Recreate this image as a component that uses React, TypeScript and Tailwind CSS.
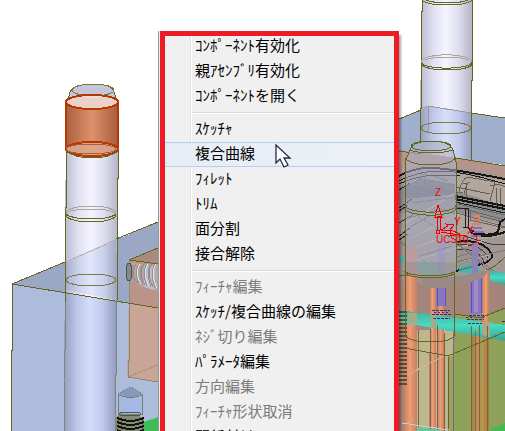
type MenuEntry = { label: string; disabled?: boolean; active?: boolean };

const groups: MenuEntry[][] = [
  [{ label: "ｺﾝﾎﾟｰﾈﾝﾄ有効化" }, { label: "親ｱｾﾝﾌﾞﾘ有効化" }, { label: "ｺﾝﾎﾟｰﾈﾝﾄを開く" }],
  [
    { label: "ｽｹｯﾁｬ" },
    { label: "複合曲線", active: true },
    { label: "ﾌｨﾚｯﾄ" },
    { label: "ﾄﾘﾑ" },
    { label: "面分割" },
    { label: "接合解除" },
  ],
  [
    { label: "ﾌｨｰﾁｬ編集", disabled: true },
    { label: "ｽｹｯﾁ/複合曲線の編集" },
    { label: "ﾈｼﾞ切り編集", disabled: true },
    { label: "ﾊﾟﾗﾒｰﾀ編集" },
    { label: "方向編集", disabled: true },
    { label: "ﾌｨｰﾁｬ形状取消", disabled: true },
    { label: "関係付け" },
  ],
];

function Cursor() {
  return (
    <svg aria-hidden="true" className="shrink-0" width="18" height="26" viewBox="0 0 18 26">
      <path d="M1 2V20L5 16 9 24 13 22 9 15H15Z" fill="white" stroke="#232a40" strokeWidth="1.3" />
    </svg>
  );
}

function MenuItem({ label, disabled, active }: MenuEntry) {
  const state = active
    ? "border-[#aecff7] bg-linear-to-r from-[#e6edf6] to-[#edf0f6]"
    : "border-transparent";
  return (
    <button
      type="button"
      role="menuitem"
      disabled={disabled}
      className={`flex h-[25px] w-full items-start gap-5 border-y pl-[34px] text-left text-[15px] leading-[19px] whitespace-nowrap text-black disabled:text-[#7b7b7b] ${state}`}
    >
      {label}
      {active && <Cursor />}
    </button>
  );
}

function ContextMenu() {
  return (
    <div
      role="menu"
      className="relative flex-1 overflow-hidden border-l border-[#979797] bg-[#f0f0f0] pt-[3px] pr-[5px] pl-[2px] shadow-[2px_4px_2px_rgba(0,0,0,0.35)]"
    >
      <div className="absolute inset-y-0 left-[31px] w-[2px] border-l border-[#e2e3e3] bg-white" />
      <div className="relative flex flex-col">
        {groups.map((group, index) => (
          <div key={index} role="group" className="flex flex-col">
            {index > 0 && (
              <div role="separator" className="flex h-2 items-center pl-[31px]">
                <div className="h-[2px] w-full border-t border-[#d8d8d8] bg-white" />
              </div>
            )}
            {group.map((item) => (
              <MenuItem key={item.label} {...item} />
            ))}
          </div>
        ))}
      </div>
    </div>
  );
}

const coils = [0, 1, 2, 3, 4, 5];
const dashes = [0, 1, 2, 3, 4, 5, 6, 7, 8, 9, 10, 11, 12, 13, 14, 15, 16, 17, 18];

function ModelView() {
  return (
    <svg
      aria-hidden="true"
      className="absolute top-0 left-0"
      width="505"
      height="431"
      viewBox="0 0 505 431"
      fill="none"
      shapeRendering="crispEdges"
    >
      <defs>
        <linearGradient id="steel">
          <stop offset="0" stopColor="#b9b9cd" />
          <stop offset="0.25" stopColor="#dedff0" />
          <stop offset="0.5" stopColor="#f5f4ff" />
          <stop offset="0.75" stopColor="#dcdcee" />
          <stop offset="1" stopColor="#b5b5c8" />
        </linearGradient>
        <linearGradient id="blueSteel">
          <stop offset="0" stopColor="#959fc4" />
          <stop offset="0.25" stopColor="#bcc6e7" />
          <stop offset="0.5" stopColor="#d4ddf8" />
          <stop offset="0.75" stopColor="#bfc8ea" />
          <stop offset="1" stopColor="#929dc2" />
        </linearGradient>
        <linearGradient id="copper">
          <stop offset="0" stopColor="#ac6041" />
          <stop offset="0.5" stopColor="#df916c" />
          <stop offset="1" stopColor="#a65c3e" />
        </linearGradient>
        <linearGradient id="rod">
          <stop offset="0" stopColor="#bd7b5d" />
          <stop offset="0.5" stopColor="#ee9d76" />
          <stop offset="1" stopColor="#c67f60" />
        </linearGradient>
        <linearGradient id="ochre">
          <stop offset="0" stopColor="#a8793e" />
          <stop offset="0.5" stopColor="#cc984e" />
          <stop offset="1" stopColor="#a67a40" />
        </linearGradient>
        <linearGradient id="teal" x1="0" y1="0" x2="0" y2="1">
          <stop offset="0" stopColor="#45ad9d" />
          <stop offset="0.5" stopColor="#49dac2" />
          <stop offset="1" stopColor="#3ba28e" />
        </linearGradient>
      </defs>

      {/* mould plate, left side */}
      <path d="M12 284 158 222V308Z" fill="#9aa8c5" />
      <path d="M12 284 158 308V431H11V351L12 350Z" fill="#adbcda" />
      <path d="M129 260 158 248V264Z" fill="#a98b7e" />
      <path d="M129 260 158 264V382L127 377V360H128Z" fill="#c8a597" />
      <path d="M129 260 158 264V308L129 303Z" fill="#ba9487" />
      <path d="M128 377 158 365" stroke="#ad9575" />
      <path d="M129 260 158 264M129 260 158 248" stroke="#66651d" />
      <path d="M129 260V360H128V377L158 382" stroke="#858b78" />
      <path d="M131 263 158 265V291Q145 289 131 281Z" fill="#b5a6a8" />
      <path d="M144 266h11v24l-11-3Z" fill="#b9bfce" />
      <ellipse cx="129" cy="272" rx="3" ry="9" fill="#858b8b" stroke="#4e5651" />
      {coils.map((i) => (
        <path key={i} d={`M${136 + i * 4} 264q-6 9 1 ${19 + i}`} stroke={i % 2 ? "#eadcd7" : "#b3816d"} />
      ))}
      {coils.map((i) => (
        <path key={i} d={`M${134 + i * 4} 265q-4 9 1 ${18 + i}`} stroke="#8d929c" />
      ))}

      <path d="M144 422 158 417V431H144Z" fill="#3fbd54" />
      <path d="M118 394 131 387 142 394V414H119Z" fill="#a5b9e4" stroke="#76806e" />
      <path d="M118 394 131 387 142 394 131 398Z" fill="#8499bd" />
      <path d="M119 395Q131 400 142 395" stroke="#76806e" />
      <path d="M120 412 123 415H138L144 419V431H116V418Z" fill="#848976" />
      <ellipse cx="130" cy="414" rx="11" ry="2" stroke="#4e564c" />
      {[418, 422, 426, 430].map((y) => (
        <path key={y} d={`M117 ${y}Q130 ${y + 6} 144 ${y}`} stroke="#11150d" strokeWidth="2" />
      ))}

      {/* selected guide pin */}
      <path d="M66 147H118V178L116 280V374L115 431H64V350L65 300V213Z" fill="url(#steel)" />
      <path d="M65 262 116 239V300L65 290Z" fill="url(#blueSteel)" fillOpacity="0.6" />
      <path d="M65 292 116 301V431H64V350Z" fill="url(#blueSteel)" />
      <path d="M12 284 65 262M116 239 158 222M12 284 158 308M12 284V350H11V431" stroke="#66651d" />
      <path d="M70 260 116 240" stroke="#b0b1ad" />
      <path d="M66 149V207H65V302M118 149V178H117V300" stroke="#66651d" />
      <path d="M65 302V350L64 380V431M116 300V374H115V431" stroke="#7c8576" />
      <path d="M67 103 70 92Q74 84 93 84T114 92L118 104Z" fill="#c5c6d9" stroke="#66651d" />
      <ellipse cx="93" cy="90" rx="21" ry="6" stroke="#7a793e" />
      <path d="M66 101H118V149A26 7 0 0 1 66 149Z" fill="url(#copper)" />
      <ellipse cx="92" cy="102" rx="26" ry="7" fill="#ecd1c8" stroke="#b83900" strokeWidth="2" />
      <ellipse cx="92" cy="149" rx="26" ry="7" fill="#e1a992" fillOpacity="0.8" stroke="#b83900" strokeWidth="2" />
      <path d="M66 101V149M118 101V149" stroke="#b83900" strokeWidth="2" />
      <path d="M83 96H102M87 97H98" stroke="#eee0d8" />
      <path d="M67 151Q74 158 92 158T117 151" stroke="#66651d" />
      <ellipse cx="91" cy="149" rx="25" ry="5" stroke="#9e6244" />
      <path d="M66 213A25 6 0 0 0 116 213M66 215A25 7 0 0 0 116 215" stroke="#66651d" />
      <path d="M66 213A25 7 0 0 1 116 213M66 214A25 5 0 0 1 116 214" stroke="#a6a69d" />
      <ellipse cx="91" cy="280" rx="25" ry="6" stroke="#7c7b48" />

      {/* mould plate and guide pin, right side */}
      <path d="M399 119 428 106 505 118V165L399 150Z" fill="#9fafcc" />
      <path d="M399 119 421 110M471 113 505 118" stroke="#66651d" />
      <path d="M422 0H472V80L471 162 420 154V80H421Z" fill="url(#steel)" />
      <path d="M421 110 428 106 471 113V162L421 154Z" fill="url(#blueSteel)" fillOpacity="0.9" />
      <path d="M421 109 428 106 471 113M428 107V131" stroke="#9899a0" />
      <path d="M422 0V11H421V108H420V144M472 0V80H471V162" stroke="#66651d" />
      <path d="M422 0Q427 5 447 5T472 0M426 0Q433 3 447 3T468 0M421 62A25 6 0 0 0 472 62M422 64A25 6 0 0 0 472 64" stroke="#66651d" />
      <path d="M421 62A25 7 0 0 1 472 62M425 60Q432 57 447 57T468 60" stroke="#a6a69d" />
      <ellipse cx="446" cy="128" rx="25" ry="6" stroke="#7c7b48" />

      {/* cavity insert */}
      <path d="M399 150 421 153 456 158 505 166V431H399Z" fill="#b5958a" />
      <path d="M399 151 421 154M456 158 505 166" stroke="#66651d" />
      <path d="M399 175Q420 166 456 168T505 178V290H399Z" fill="#a39793" />
      <path d="M456 172 505 181V206L456 197Z" fill="#b3a79d" />
      <path d="M399 186Q450 184 505 208V222Q450 207 399 213Z" fill="#8d8c8e" />
      <path d="M457 213 505 225V235Q478 243 457 236Z" fill="#b3a39d" />
      <path d="M399 235Q460 224 492 254L479 264 399 290Z" fill="#9d918e" />
      <path d="M399 176Q415 167 434 168T505 179" stroke="#151515" strokeWidth="2" />
      <path d="M399 181Q418 171 440 171T505 184M399 184Q418 175 440 175L460 176" stroke="#151515" />
      <path d="M455 196 505 206M455 199 505 209" stroke="#151515" strokeWidth="2" />
      <path d="M455 202 505 213M399 208 412 199M399 223 414 214M399 190 410 183M399 211 408 205M399 236 410 228M399 240 408 234" stroke="#202020" />
      <path d="M459 192Q462 178 468 177L495 182 490 201M464 194Q466 183 470 182M463 183H466V198M490 186 498 184 505 187M496 188V204M500 188V204M456 187 490 194" stroke="#5d605a" />
      <path d="M458 204 505 215M457 207 505 220M457 213 505 227M470 211V220L505 228M474 215 500 221M457 192 463 193" stroke="#676964" />
      <path d="M455 209 465 208H468V228M465 208V228M463 227H468" stroke="#202020" />
      <path d="M468 228Q484 239 498 232L500 222 505 219M470 232Q484 240 505 232M456 242Q481 238 491 253Q495 258 485 263L456 271" stroke="#161616" strokeWidth="2" />
      <path d="M456 245Q482 243 488 258M457 250Q478 247 484 262M474 239 494 245 505 244M461 235 474 239" stroke="#3d3d3a" />
      <path d="M474 220H479V216H473M472 224H481M473 228H480" stroke="#df8060" strokeWidth="2" />
      <path d="M470 228H482M474 232H484M471 236H481" stroke="#8670bd" strokeWidth="2" />
      <path d="M405 224 455 193M410 239 459 214M407 251 463 229M413 261 485 240M408 272 489 255" stroke="#b9b5b4" />
      <path d="M408 211 448 234M401 242 444 278M449 235 494 276M458 245 499 275M456 262 505 250M456 257 482 250" stroke="#75777a" />
      <path d="M414 261 441 263 446 270 428 276 411 266ZM458 267 474 264 486 275 460 273ZM399 256H404V263H399Z" fill="#3fb8ac" fillOpacity="0.8" />
      <path d="M407 247H417V280H407Z" fill="#c9806a" />
      <path d="M438 241H445V281H438ZM472 243H478V280H472Z" fill="#8f80b8" />
      <path d="M456 278Q482 280 505 257M399 275Q432 280 456 278" stroke="#66651d" />

      {/* cores, ejector rods and cooling lines */}
      <path d="M399 280Q440 291 486 270L505 278V431H399Z" fill="#a3857c" />
      <path d="M456 314 480 318 505 310V431H448V357L456 340Z" fill="#8ea25b" />
      <path d="M417 330H453V431H417Z" fill="#bdb78e" />
      <path d="M448 356H454V431H448Z" fill="#a19e67" />
      <path d="M404 276H417V431H403Z" fill="url(#rod)" />
      <path d="M430 277H436V431H429Z" fill="url(#rod)" />
      <path d="M438 278H444V431H437Z" fill="url(#rod)" />
      <path d="M482 270H489V330H482Z" fill="url(#rod)" />
      <path d="M472 325H479V431H471ZM482 327H489V431H481Z" fill="url(#ochre)" />
      <path d="M436 279H446V306H436Z" fill="#8777c0" />
      <path d="M470 277H482V314H470Z" fill="#8578c8" />
      <path d="M474 279H478V312H474Z" fill="#a58ac1" />
      <path d="M471 278V313M481 278V313M437 284V306M445 284V306" stroke="#5659aa" />
      <path d="M419 273Q448 282 488 270L485 276Q453 292 424 287Z" fill="#9a8984" />
      <path d="M399 310 505 325V341L399 322Z" fill="url(#teal)" />
      <path d="M490 270 505 273V285L490 281Z" fill="url(#teal)" />
      <path d="M408 313H417V324L408 322ZM482 322H490V337L482 335ZM431 315H436V328L431 327Z" fill="#a8aa85" />
      <path d="M432 310H450M432 314H451M433 318H450M465 315H485M467 319H484M468 323H482M502 321H505" stroke="#30327c" strokeDasharray="3 1" />
      <path d="M434 312H450M466 317H484" stroke="#30327c" strokeDasharray="2 2" />
      <path d="M418 330V431M430 329V431M437 325V431M444 333V431M471 326V431M479 325V431M487 326V431" stroke="#786348" />
      <path d="M453 334V431M475 331V431" stroke="#67766c" />
      <path d="M399 379 448 354" stroke="#d9b1a0" />
      <path d="M399 347 448 356 505 332M448 357V431M455 314 480 318 505 308" stroke="#66651d" />
      <path d="M402 423 449 430" stroke="#b9cfe9" />
      <path d="M417 427 440 430V431H417Z" fill="#65c69c" />
      <path d="M488 431 505 423V431Z" fill="#43bb50" />
      {dashes.map((i) => (
        <path key={i} d={`M399 ${312 + i * 4}H407`} stroke="#5c4c30" strokeWidth="2" />
      ))}

      {/* foreground pin */}
      <path d="M405 163 409 149Q413 141 431 141T453 149L456 163V272A26 7 0 0 1 405 272Z" fill="#aeb0c4" fillOpacity="0.58" />
      <path d="M405 187 420 178 455 184V194L405 199Z" fill="#7f8496" fillOpacity="0.5" />
      <path d="M405 262H456V272A26 7 0 0 1 405 272Z" fill="#8f8a80" fillOpacity="0.4" />
      <path d="M417 181 426 172 424 186M434 176 448 181M405 190 455 184M405 195 455 190M412 203 455 197M409 218 440 209 455 214M410 227 430 216M420 256 452 246" stroke="#888fa6" />
      <path d="M410 150Q413 141 431 141T453 150L456 162V270M410 150 405 162V335" stroke="#66651d" />
      <ellipse cx="431" cy="146" rx="20" ry="5" stroke="#66651d" />
      <path d="M409 150Q418 153 431 153T453 150M405 158Q411 165 431 165T456 157M405 205A25 7 0 0 0 456 205M405 208A25 7 0 0 0 456 208M404 271A26 6 0 0 0 455 271M404 273A26 6 0 0 0 455 273M404 335Q410 342 430 342T454 336V272" stroke="#66651d" />

      {/* user coordinate system */}
      <g stroke="#f20000">
        <path d="M437 230V216H440V230M435 217 438 205 442 217ZM441 230 448 226 446 224 454 225 449 231ZM441 232 465 236M451 230 460 234 450 236Z" />
        <circle cx="438" cy="232" r="2" />
      </g>
      <g fill="#f20000" className="font-['Liberation_Sans'] text-[10px]">
        <text x="435" y="196">Z</text>
        <text x="454" y="225">Y</text>
        <text x="467" y="234">X</text>
        <text x="436" y="243">UCS10_1</text>
      </g>
    </svg>
  );
}

export default function App() {
  return (
    <main className="relative flex h-screen w-full flex-col overflow-hidden bg-white pt-[31px] pl-[158px] font-['Noto_Sans_CJK_JP',sans-serif]">
      <ModelView />
      <div className="relative flex w-[241px] flex-1 flex-col overflow-visible">
        <ContextMenu />
        <div className="pointer-events-none absolute inset-0 mb-[2px] ml-[2px] border-5 border-[#ed1c24]" />
      </div>
    </main>
  );
}
